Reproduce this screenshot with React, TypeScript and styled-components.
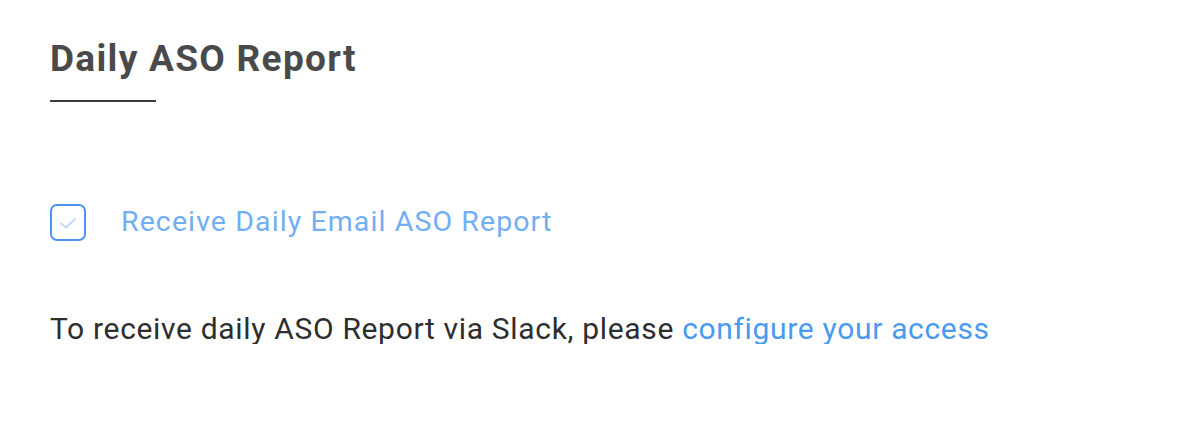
import React from "react";
import styled, { createGlobalStyle } from "styled-components";

const GlobalStyle = createGlobalStyle`
  body {
    margin: 0;
    background: #ffffff;
    font-family: Roboto, "Liberation Sans", sans-serif;
  }
`;

const Page = styled.div`
  padding: 40px 50px 0;
`;

const Title = styled.h2`
  margin: 0;
  font-size: 37px;
  font-weight: 700;
  line-height: 37px;
  letter-spacing: 1.3px;
  color: #4a4a4a;
`;

const TitleRule = styled.div`
  width: 106px;
  height: 2px;
  margin-top: 23px;
  background: #3c3c3c;
`;

const CheckRow = styled.label`
  display: flex;
  align-items: center;
  gap: 35px;
  margin-top: 101px;
  cursor: pointer;
`;

const Box = styled.span<{ $checked: boolean }>`
  width: 36px;
  height: 37px;
  box-sizing: border-box;
  border: 2px solid #4d94f0;
  border-radius: 7px;
  display: flex;
  align-items: center;
  justify-content: center;
  background: ${(p) => (p.$checked ? "#ffffff" : "transparent")};
`;

const CheckLabel = styled.span`
  font-size: 28.5px;
  line-height: 37px;
  letter-spacing: 1.1px;
  padding-bottom: 2px;
  color: #72aef4;
`;

const Note = styled.p`
  margin: 72px 0 0;
  font-size: 30px;
  line-height: 30px;
  letter-spacing: 0.67px;
  color: #2e2e2e;
`;

const Link = styled.a`
  color: #4a9af0;
  text-decoration: none;
`;

export default function App() {
  const [checked, setChecked] = React.useState(true);
  return (
    <>
      <GlobalStyle />
      <Page>
        <Title>Daily ASO Report</Title>
        <TitleRule />
        <CheckRow onClick={() => setChecked(!checked)}>
          <Box $checked={checked}>
            {checked && (
              <svg width="20" height="16" viewBox="0 0 20 16">
                <path
                  d="M3 8.5 L8 12.5 L17 4"
                  fill="none"
                  stroke="#c4d9f5"
                  strokeWidth="2"
                  strokeLinecap="round"
                  strokeLinejoin="round"
                />
              </svg>
            )}
          </Box>
          <CheckLabel>Receive Daily Email ASO Report</CheckLabel>
        </CheckRow>
        <Note>
          To receive daily ASO Report via Slack, please{" "}
          <Link href="#">configure your access</Link>
        </Note>
      </Page>
    </>
  );
}
